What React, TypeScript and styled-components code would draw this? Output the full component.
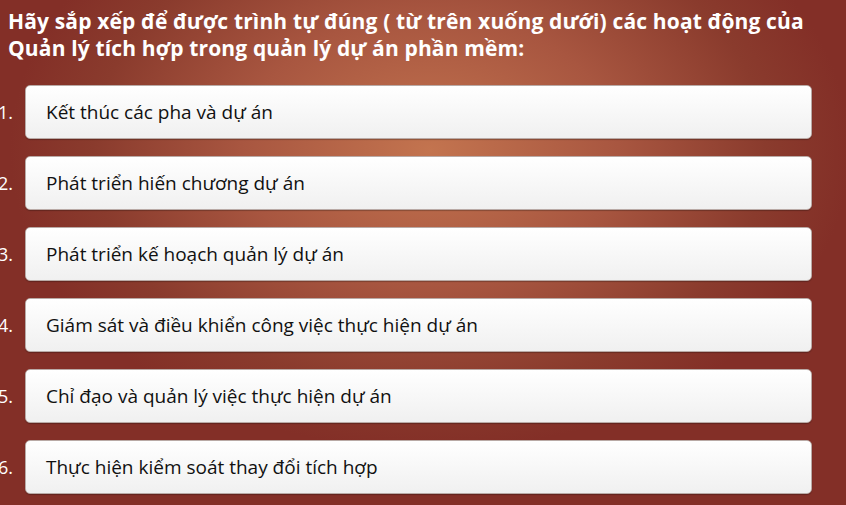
import styled, { createGlobalStyle } from 'styled-components';

const GlobalStyle = createGlobalStyle`
  html, body {
    margin: 0;
    padding: 0;
  }
  body {
    font-family: "Open Sans", "Noto Sans", sans-serif;
    overflow: hidden;
  }
`;

const Page = styled.div`
  width: 846px;
  height: 505px;
  box-sizing: border-box;
  overflow: hidden;
  background: radial-gradient(ellipse 420px 300px at 430px 150px, #c3744f 0%, #a85640 45%, #8a3b2d 80%, #832f27 100%);
  background-color: #832f27;
`;

const Question = styled.h1`
  margin: 0;
  padding: 8px 0 0 8px;
  font-size: 21px;
  line-height: 27px;
  font-weight: 700;
  letter-spacing: 0.15px;
  color: #fff;
  white-space: nowrap;
`;

const Items = styled.ol`
  list-style: none;
  margin: 0;
  padding: 23px 0 0 0;
  display: flex;
  flex-direction: column;
  gap: 17px;
`;

const Row = styled.li`
  display: grid;
  grid-template-columns: 25px 787px;
  align-items: center;
`;

const Num = styled.span`
  justify-self: end;
  padding-right: 12px;
  font-size: 18px;
  color: #fff;
  white-space: nowrap;
`;

const Card = styled.div`
  height: 54px;
  box-sizing: border-box;
  display: flex;
  align-items: center;
  padding-left: 20px;
  border: 1px solid #b9aaa6;
  border-radius: 5px;
  background: linear-gradient(#ffffff, #f0f0f0);
  box-shadow: 0 1px 1px rgba(0, 0, 0, 0.25);
  font-size: 19px;
  color: #111;
`;

const steps = [
  'Kết thúc các pha và dự án',
  'Phát triển hiến chương dự án',
  'Phát triển kế hoạch quản lý dự án',
  'Giám sát và điều khiển công việc thực hiện dự án',
  'Chỉ đạo và quản lý việc thực hiện dự án',
  'Thực hiện kiểm soát thay đổi tích hợp',
];

export default function App() {
  return (
    <Page>
      <GlobalStyle />
      <Question>
        Hãy sắp xếp để được trình tự đúng ( từ trên xuống dưới) các hoạt động của
        <br />
        Quản lý tích hợp trong quản lý dự án phần mềm:
      </Question>
      <Items>
        {steps.map((s, i) => (
          <Row key={i}>
            <Num>{i + 1}.</Num>
            <Card>{s}</Card>
          </Row>
        ))}
      </Items>
    </Page>
  );
}
